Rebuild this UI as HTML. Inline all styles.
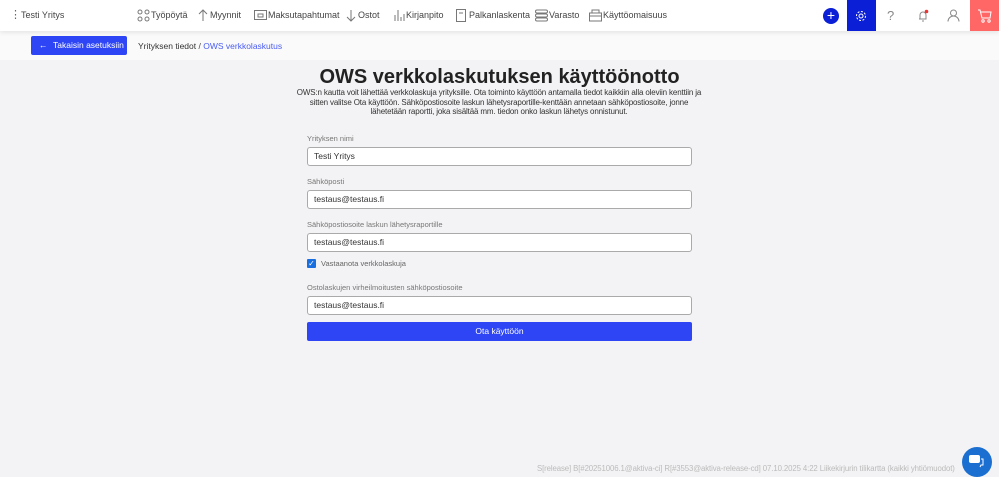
<!DOCTYPE html>
<html><head><meta charset="utf-8"><style>
*{box-sizing:border-box;margin:0;padding:0}
body{width:999px;height:474px;overflow:hidden;background:#f3f3f5;font-family:"Liberation Sans",sans-serif;color:#333;position:relative}
.nav{position:absolute;left:0;top:0;width:999px;height:31px;background:#fff;box-shadow:0 2px 4px rgba(0,0,0,.08);z-index:2}
.nav span{position:absolute;top:10px;font-size:9px;color:#444;white-space:nowrap}
.ic{position:absolute;top:9px}
.sub{position:absolute;left:0;top:31px;width:999px;height:29px;background:#fafafa}
.back{position:absolute;left:31px;top:36px;width:96px;height:19px;background:#2d45f5;border-radius:2px;color:#fff;font-size:8.5px;line-height:19px;padding-left:22px;white-space:nowrap}
.abs{position:absolute;white-space:nowrap}
.lbl{position:absolute;left:307px;font-size:7.5px;color:#777;white-space:nowrap}
.inp{position:absolute;left:307px;width:385px;height:19px;background:#fff;border:1px solid #aaa;border-radius:3px;font-size:8.5px;line-height:17px;padding-left:6px;color:#333}
</style></head><body>
<div class="nav">
<span style="left:10px;top:8px;font-size:11px;color:#666">⋮</span>
<span style="left:21px">Testi Yritys</span>
<svg class="ic" style="left:137px" width="13" height="13" viewBox="0 0 13 13" fill="none" stroke="#777"><circle cx="3" cy="3" r="2"/><circle cx="10" cy="3" r="2"/><circle cx="3" cy="10" r="2"/><circle cx="10" cy="10" r="2"/></svg>
<span style="left:151px">Työpöytä</span>
<svg class="ic" style="left:198px" width="10" height="13" viewBox="0 0 10 13" fill="none" stroke="#777"><path d="M5 12V1M1 5l4-4 4 4"/></svg>
<span style="left:210px">Myynnit</span>
<svg class="ic" style="left:254px;top:10px" width="13" height="10" viewBox="0 0 13 10" fill="none" stroke="#777"><rect x=".5" y=".5" width="12" height="9"/><rect x="4" y="4" width="5" height="3"/></svg>
<span style="left:268px">Maksutapahtumat</span>
<svg class="ic" style="left:346px" width="10" height="13" viewBox="0 0 10 13" fill="none" stroke="#777"><path d="M5 1v11M1 8l4 4 4-4"/></svg>
<span style="left:358px">Ostot</span>
<svg class="ic" style="left:394px" width="11" height="13" viewBox="0 0 11 13" fill="none" stroke="#777"><path d="M1 12V6M4 12V1M7 12V8M10 12V5"/></svg>
<span style="left:406px">Kirjanpito</span>
<svg class="ic" style="left:456px" width="10" height="13" viewBox="0 0 10 13" fill="none" stroke="#777"><rect x=".5" y=".5" width="9" height="12"/><path d="M3 4h4"/></svg>
<span style="left:469px">Palkanlaskenta</span>
<svg class="ic" style="left:535px" width="13" height="13" viewBox="0 0 13 13" fill="none" stroke="#777"><rect x=".5" y="1" width="12" height="3" rx="1.5"/><rect x=".5" y="5" width="12" height="3" rx="1.5"/><rect x=".5" y="9" width="12" height="3" rx="1.5"/></svg>
<span style="left:549px">Varasto</span>
<svg class="ic" style="left:589px" width="13" height="13" viewBox="0 0 13 13" fill="none" stroke="#777"><rect x=".5" y="4" width="12" height="8"/><path d="M3 4V1h7v3M.5 7h12"/></svg>
<span style="left:603px">Käyttöomaisuus</span>
<div style="position:absolute;left:823px;top:8px;width:16px;height:16px;border-radius:50%;background:#0a1fd6;color:#fff;font-size:14px;line-height:15px;text-align:center">+</div>
<div style="position:absolute;left:847px;top:0;width:29px;height:31px;background:#0a1fd6"></div>
<svg class="ic" style="left:855px;top:10px" width="12" height="12" viewBox="0 0 12 12" fill="none" stroke="#fff"><circle cx="6" cy="6" r="2"/><circle cx="6" cy="6" r="4.5" stroke-dasharray="2 1.5"/></svg>
<span style="left:887px;top:8px;font-size:13px;color:#888">?</span>
<svg class="ic" style="left:917px;top:9px" width="12" height="13" viewBox="0 0 12 13" fill="none" stroke="#888"><path d="M3 10V6a3 3 0 016 0v4H2M5 12h2"/><circle cx="9.5" cy="2.5" r="1.8" fill="#e33" stroke="none"/></svg>
<svg class="ic" style="left:947px;top:9px" width="13" height="13" viewBox="0 0 13 13" fill="none" stroke="#888"><circle cx="6.5" cy="4" r="3"/><path d="M1 12.5a5.5 5.5 0 0111 0"/></svg>
<div style="position:absolute;left:970px;top:0;width:29px;height:31px;background:#f66"></div>
<svg class="ic" style="left:977px;top:9px" width="15" height="14" viewBox="0 0 15 14" fill="none" stroke="#fff"><path d="M1 1h2l2 8h8l1-6H4"/><circle cx="6" cy="12" r="1.2"/><circle cx="12" cy="12" r="1.2"/></svg>
</div>
<div class="sub"></div>
<div class="back"><span style="position:absolute;left:8px;top:0">←</span>Takaisin asetuksiin</div>
<div class="abs" style="left:138px;top:41px;font-size:8.5px;color:#333">Yrityksen tiedot <span style="color:#444">/</span> <span style="color:#4a5cf5">OWS verkkolaskutus</span></div>
<div class="abs" style="left:0;width:999px;text-align:center;top:66px;font-size:20px;font-weight:bold;color:#222">OWS verkkolaskutuksen käyttöönotto</div>
<div class="abs" style="left:290px;width:418px;text-align:center;top:88px;font-size:8px;line-height:9.6px;white-space:normal;color:#333;letter-spacing:-0.15px">OWS:n kautta voit lähettää verkkolaskuja yrityksille. Ota toiminto käyttöön antamalla tiedot kaikkiin alla oleviin kenttiin ja<br>sitten valitse Ota käyttöön. Sähköpostiosoite laskun lähetysraportille-kenttään annetaan sähköpostiosoite, jonne<br>lähetetään raportti, joka sisältää mm. tiedon onko laskun lähetys onnistunut.</div>
<div class="lbl" style="top:134px">Yrityksen nimi</div>
<div class="inp" style="top:147px">Testi Yritys</div>
<div class="lbl" style="top:177px">Sähköposti</div>
<div class="inp" style="top:190px">testaus@testaus.fi</div>
<div class="lbl" style="top:220px">Sähköpostiosoite laskun lähetysraportille</div>
<div class="inp" style="top:233px">testaus@testaus.fi</div>
<div style="position:absolute;left:307px;top:259px;width:9px;height:9px;background:#1a6fe0;border-radius:1px;color:#fff;font-size:8px;line-height:9px;text-align:center">✓</div>
<div class="lbl" style="left:321px;top:259px;color:#666">Vastaanota verkkolaskuja</div>
<div class="lbl" style="top:283px">Ostolaskujen virheilmoitusten sähköpostiosoite</div>
<div class="inp" style="top:296px">testaus@testaus.fi</div>
<div style="position:absolute;left:307px;top:322px;width:385px;height:19px;background:#2d45f5;border-radius:2px;color:#fff;font-size:8.5px;line-height:19px;text-align:center">Ota käyttöön</div>
<div class="abs" style="left:537px;top:464px;font-size:7.8px;color:#bbb;letter-spacing:-0.1px">S[release] B[#20251006.1@aktiva-ci] R[#3553@aktiva-release-cd] 07.10.2025 4:22 Liikekirjurin tilikartta (kaikki yhtiömuodot)</div>
<div style="position:absolute;left:962px;top:447px;width:30px;height:30px;border-radius:50%;background:#1b6fd0"></div>
<svg style="position:absolute;left:969px;top:455px" width="16" height="13" viewBox="0 0 16 13"><rect x="0" y="0" width="11" height="8" rx="2" fill="#fff"/><path d="M12 4h2v6h-2l-1 2" fill="none" stroke="#fff"/></svg>
</body></html>
